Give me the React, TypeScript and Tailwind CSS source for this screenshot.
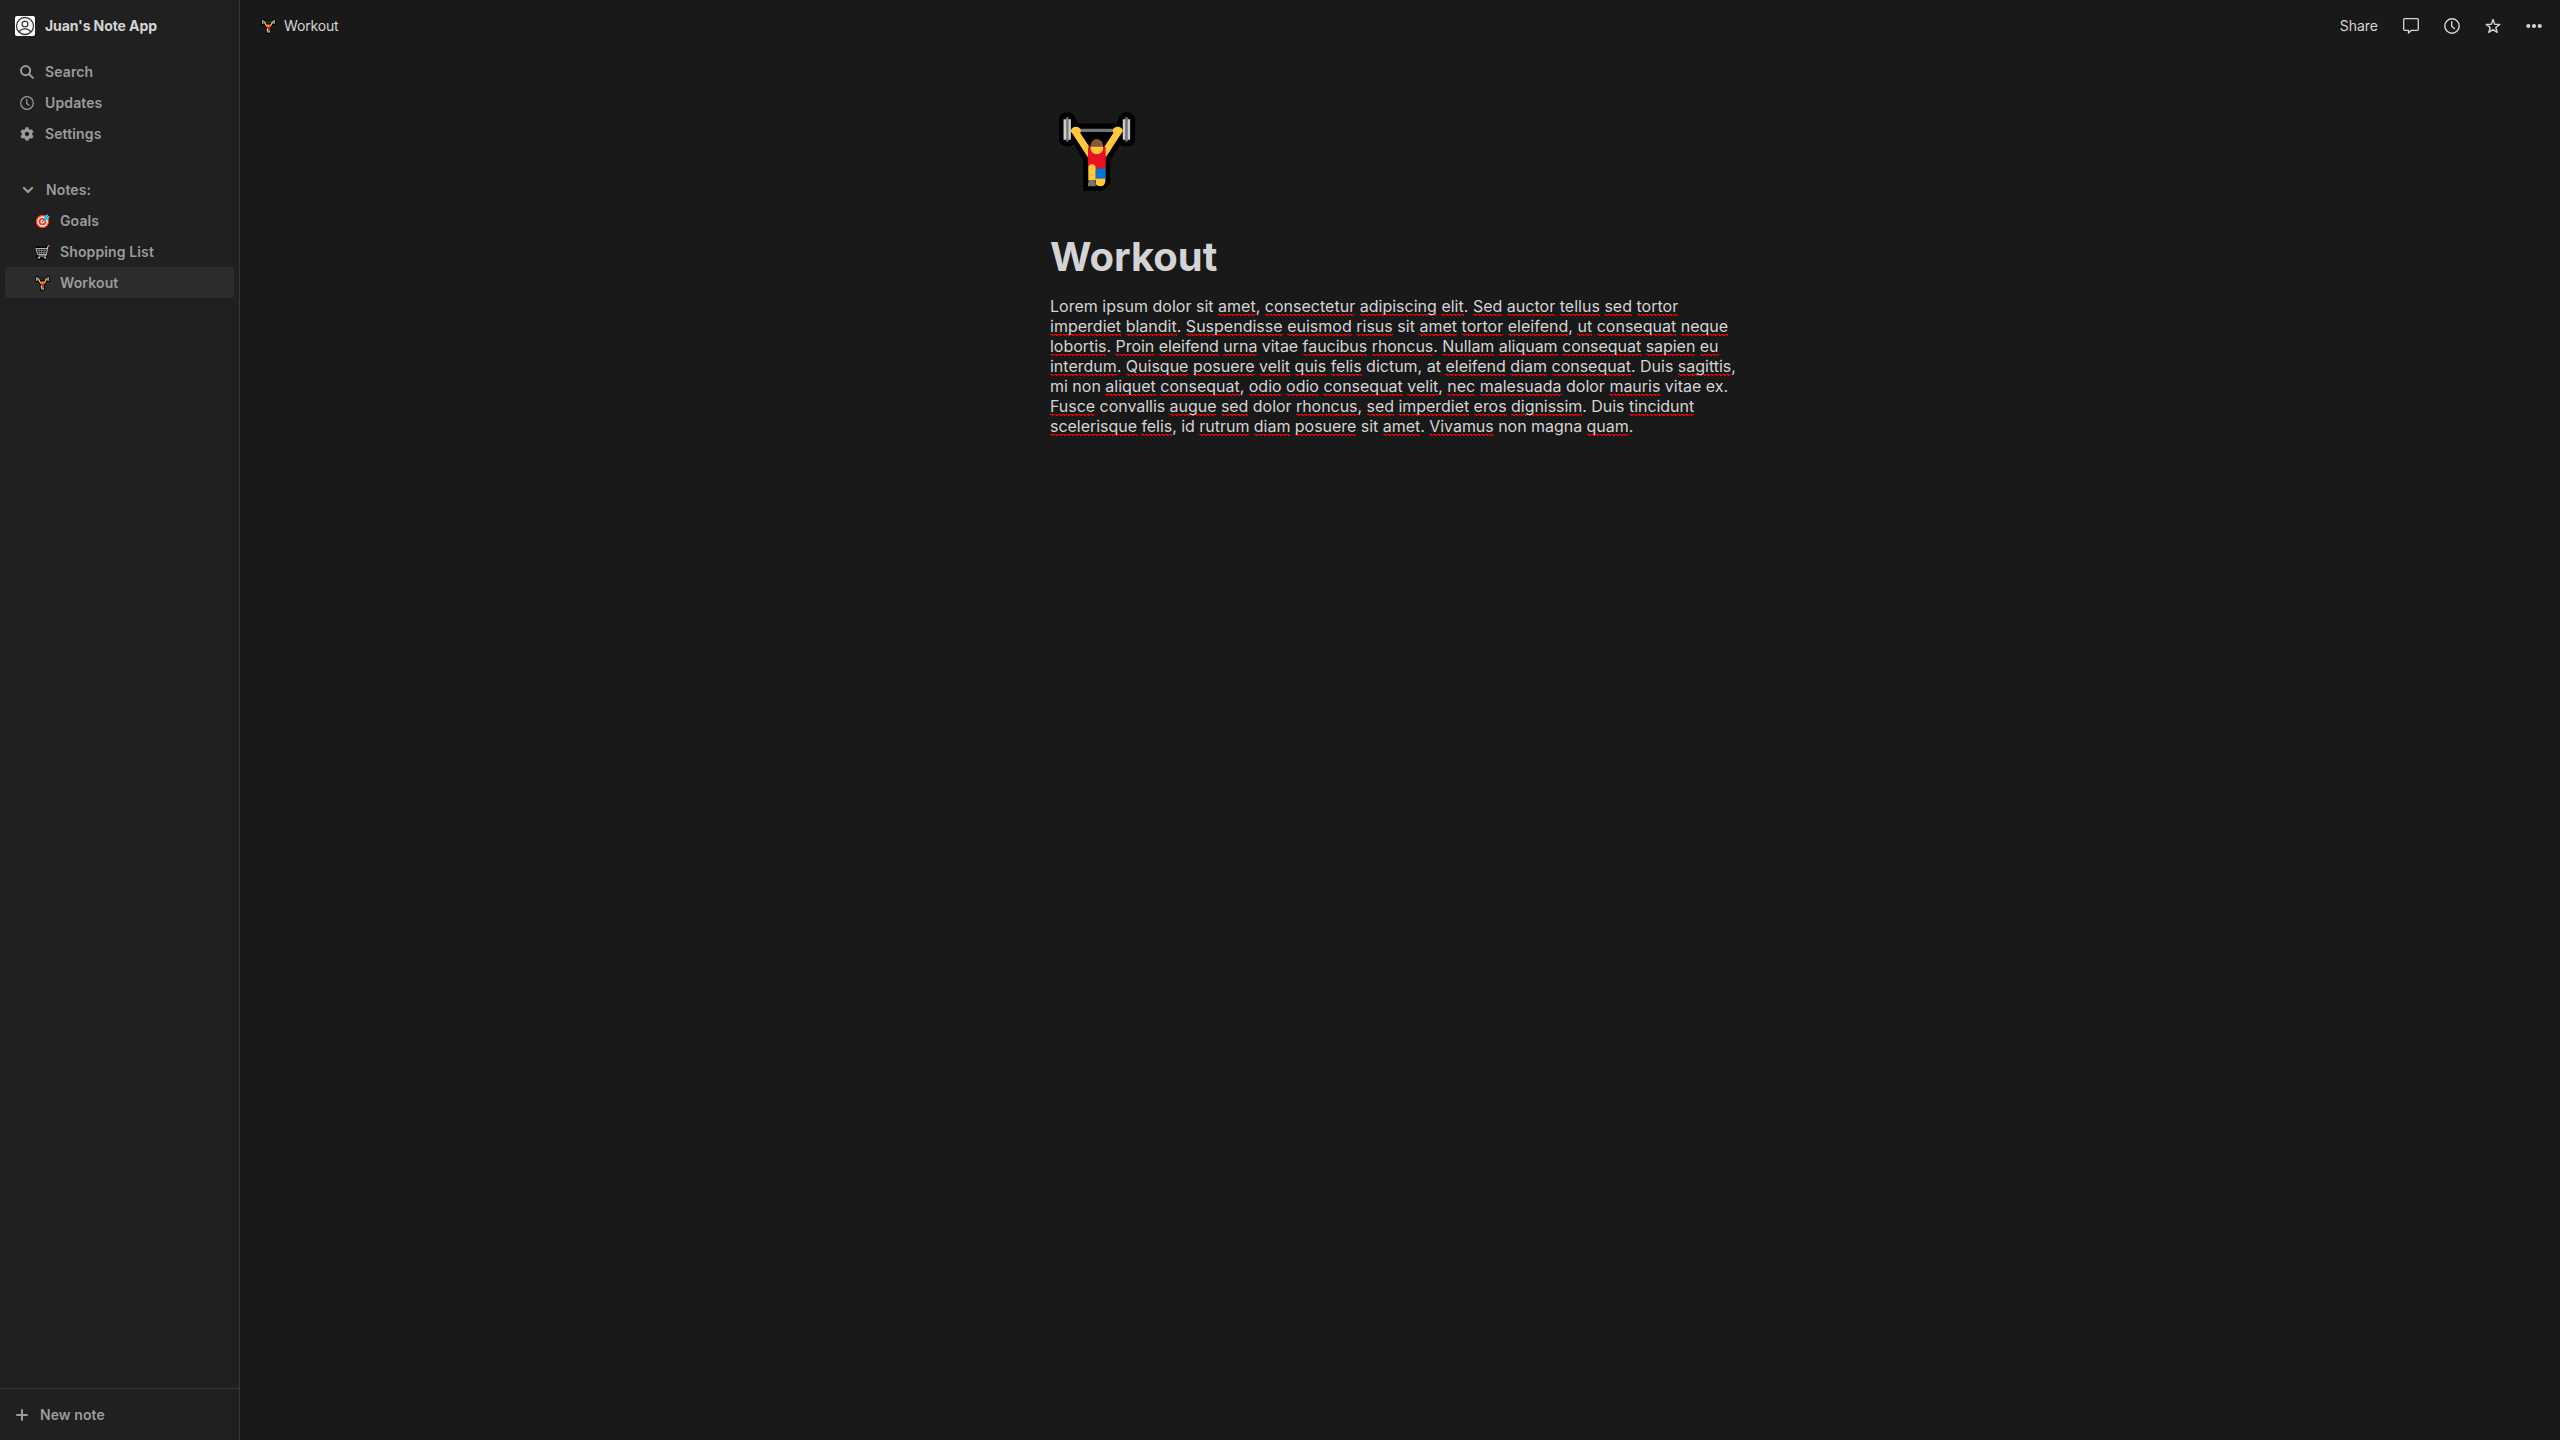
import { Fragment } from "react";
import type { ReactNode } from "react";
import { FaCog } from "react-icons/fa";

function WeightLifter({ className }: { className: string }) {
  return (
    <svg viewBox="55 30 232 245" className={className} aria-hidden="true">
      <path
        d="M57 56Q60 38 82 36Q104 38 108 56L112 70H230L235 56Q240 38 260 36Q283 40 285 56V122Q281 138 260 139Q246 137 240 132L211 180V250L190 270L186 272H130V182L103 132Q96 138 82 139Q61 137 57 122Z"
        fill="#000"
      />
      <path d="M71 58h22v61H71zM248 58h22v61h-22z" fill="#cccccc" />
      <path d="M79 52h7v72h-7zM255 52h8v72h-8z" fill="#767676" />
      <path d="M118 86h106v10H118z" fill="#767676" />
      <path d="M96 94L119 96L151 144L144 172L100 104zM245 94L222 96L190 144L197 172L241 104z" fill="#ffc83d" />
      <ellipse cx="108" cy="92" rx="15" ry="12" fill="#ffc83d" />
      <ellipse cx="233" cy="92" rx="15" ry="12" fill="#ffc83d" />
      <path d="M144 140h53v66h-53z" fill="#e81224" />
      <path d="M152 137h37v7a18.500 18.500 0 0 1-37 0z" fill="#ffc83d" />
      <path d="M152 140v-5a18.500 18 0 0 1 37 0v5z" fill="#8e562e" />
      <path d="M167 205h30v30h-30z" fill="#0078d7" />
      <path d="M167 235h29v8q-1 15-15 15q-9 0-14-6z" fill="#ffc83d" />
      <path d="M145 241v-38q1-11 11-11t11 11v38z" fill="#ffc83d" />
      <path d="M144 258v-8q1-10 11-10t12 10v8z" fill="#767676" />
    </svg>
  );
}

function Target() {
  return (
    <svg viewBox="0 0 16 16" className="size-4" aria-hidden="true">
      <circle cx="7.500" cy="8.500" r="7.500" fill="#000" />
      <circle cx="7.500" cy="8.500" r="6.900" fill="#f03a17" />
      <circle cx="7.500" cy="8.500" r="4.600" fill="none" stroke="#fff" strokeWidth="1.500" />
      <circle cx="7.500" cy="8.500" r="1.500" fill="none" stroke="#fff" strokeWidth="1.200" />
      <path d="M7.500 8.500L11 5" stroke="#106ebe" strokeWidth="1" />
      <path d="M9 7V4L12.200 1L13 3L15 3.800L12 7z" fill="#31d2f7" />
      <path d="M9.500 6.500L13 3" stroke="#0f8ad0" strokeWidth="0.800" />
    </svg>
  );
}

function Cart() {
  return (
    <svg viewBox="0 0 16 16" className="size-4" fill="none" aria-hidden="true">
      <path d="M1 4h11l2-3M2 8l1 4h9M3 14.500h8" stroke="#000" strokeWidth="3" />
      <path d="M1 4.500h11.500l-1.200 6H2.500z" fill="#222" stroke="#b5b5b5" strokeWidth="1" />
      <path d="M1.500 6.500h10.500M2 8.500h9.500M4 4.500l.6 6M6.500 4.500v6M9.200 4.500l-.4 6" stroke="#909090" strokeWidth="0.600" />
      <path d="M12 5l1.500-3.500M11.300 10.500l-1 1.500H3.500" stroke="#cccccc" strokeWidth="1.100" />
      <path d="M13 2.300l1.700-.9" stroke="#e8503a" strokeWidth="1.500" />
      <circle cx="4" cy="13.700" r="1" fill="#ccc" />
      <circle cx="10" cy="13.700" r="1" fill="#ccc" />
    </svg>
  );
}

function Clock({ className, width }: { className: string; width: number }) {
  return (
    <svg viewBox="0 0 16 16" className={className} fill="none" stroke="currentColor" strokeWidth={width} strokeLinecap="round" strokeLinejoin="round" aria-hidden="true">
      <circle cx="8" cy="8" r="7.200" />
      <path d="M7.700 3.800v4.700l2.700 2" />
    </svg>
  );
}

function Row({ icon, label, active = false, nested = false }: { icon: ReactNode; label: string; active?: boolean; nested?: boolean }) {
  return (
    <div
      className={`mx-[5px] flex h-[31px] items-center rounded-[3px] text-sm leading-5 font-semibold tracking-[0.12px] text-[#9b9b9b] ${
        active ? "bg-[#2c2c2c]" : ""
      } ${nested ? "pl-[30px]" : "pl-[15px]"}`}
    >
      <span className="flex min-w-[25px] shrink-0 items-center">{icon}</span>
      <span>{label}</span>
    </div>
  );
}

/* Words in [brackets] are flagged by the spell checker. */
const lines = [
  { tracking: "tracking-[0.012px]", text: "Lorem ipsum dolor sit [amet], [consectetur] [adipiscing] [elit]. [Sed] [auctor] [tellus] [sed] [tortor]" },
  { tracking: "tracking-[0.010px]", text: "[imperdiet] [blandit]. [Suspendisse] [euismod] [risus] sit [amet] [tortor] [eleifend], [ut] [consequat] [neque]" },
  { tracking: "tracking-[-0.035px]", text: "[lobortis]. [Proin] [eleifend] [urna] vitae [faucibus] [rhoncus]. [Nullam] [aliquam] [consequat] [sapien] [eu]" },
  { tracking: "tracking-[-0.004px]", text: "[interdum]. [Quisque] [posuere] [velit] [quis] [felis] dictum, at [eleifend] [diam] [consequat]. Duis [sagittis]," },
  { tracking: "tracking-[-0.010px]", text: "mi non [aliquet] [consequat], [odio] [odio] [consequat] [velit], [nec] [malesuada] dolor [mauris] vitae ex." },
  { tracking: "tracking-[-0.040px]", text: "[Fusce] convallis [augue] [sed] dolor [rhoncus], [sed] [imperdiet] [eros] [dignissim]. Duis [tincidunt]" },
  { tracking: "tracking-[-0.034px]", text: "[scelerisque] [felis], id [rutrum] [diam] [posuere] sit [amet]. [Vivamus] non magna [quam]." },
];

function Line({ text, tracking }: { text: string; tracking: string }) {
  return (
    <span className={`block whitespace-nowrap ${tracking}`}>
      {text.split(/(\[[^\]]+\])/).map((part, i) =>
        part.startsWith("[") ? (
          <span
            key={i}
            className="bg-[image:linear-gradient(90deg,#f00000_75%,transparent_75%),linear-gradient(90deg,transparent_50%,#f00000_50%)] bg-[length:4px_1px,4px_1px] bg-[position:0_calc(100%-1px),0_100%] bg-repeat-x"
          >
            {part.slice(1, -1)}
          </span>
        ) : (
          <Fragment key={i}>{part}</Fragment>
        ),
      )}
    </span>
  );
}

export default function App() {
  return (
    <div className="flex h-[1440px] w-[2560px] overflow-hidden bg-[#191919] font-['Inter',sans-serif] text-[#d4d4d4]">
      <aside className="flex w-60 shrink-0 flex-col border-r border-[#373737] bg-[#202020]">
        <div className="flex h-[52px] items-center gap-2.5 pl-[15px]">
          <svg viewBox="0 0 20 20" className="size-5" fill="none" stroke="#37373b" strokeWidth="1.300" aria-hidden="true">
            <rect width="20" height="20" rx="2" fill="#fff" stroke="none" />
            <circle cx="10" cy="10" r="8.500" />
            <circle cx="10" cy="8" r="2.900" />
            <path d="M4.200 16.200c1.200-2.600 3.200-3.400 5.800-3.400s4.600.8 5.800 3.400" />
          </svg>
          <span className="text-sm leading-5 font-bold tracking-[-0.09px]">Juan's Note App</span>
        </div>
        <nav className="mt-1 flex flex-col">
          <Row
            label="Search"
            icon={
              <svg viewBox="0 0 14 14" className="size-3.5" fill="none" stroke="currentColor" strokeWidth="2" strokeLinecap="round" aria-hidden="true">
                <circle cx="5.600" cy="5.600" r="4.600" />
                <path d="M9.200 9.200l3.700 3.700" />
              </svg>
            }
          />
          <Row label="Updates" icon={<Clock className="size-3.5" width={1.4} />} />
          <Row label="Settings" icon={<FaCog className="size-3.5" />} />
        </nav>
        <nav className="mt-[25px] flex flex-col">
          <Row
            label="Notes:"
            icon={
              <svg viewBox="0 0 10 6" className="mr-[13px] ml-[3px] h-1.5 w-2.5 shrink-0 overflow-visible" fill="none" stroke="currentColor" strokeWidth="2.200" strokeLinecap="round" strokeLinejoin="round" aria-hidden="true">
                <path d="M1 1l4 4 4-4" />
              </svg>
            }
          />
          <Row nested label="Goals" icon={<Target />} />
          <Row nested label="Shopping List" icon={<Cart />} />
          <Row nested active label="Workout" icon={<WeightLifter className="h-4 w-[15px]" />} />
        </nav>
        <div className="mt-auto flex h-[52px] items-center gap-3 border-t border-[#373737] pl-4 text-[#9b9b9b]">
          <svg viewBox="0 0 12 12" className="size-3" stroke="currentColor" strokeWidth="2" strokeLinecap="round" aria-hidden="true">
            <path d="M6 1v10M1 6h10" />
          </svg>
          <span className="text-sm leading-5 font-semibold tracking-[0.08px]">New note</span>
        </div>
      </aside>
      <div className="flex flex-1 flex-col">
        <header className="flex h-[52px] items-center justify-between pr-[18px] pl-[21px]">
          <div className="flex items-center gap-2">
            <WeightLifter className="h-4 w-[15px]" />
            <span className="text-sm leading-5 tracking-[-0.15px]">Workout</span>
          </div>
          <div className="flex items-center gap-[25px]">
            <span className="text-sm leading-5">Share</span>
            <svg viewBox="0 0 16 16" className="size-4" fill="none" stroke="currentColor" strokeWidth="1.300" strokeLinejoin="round" aria-hidden="true">
              <path d="M1.700 0.700h12.600q1 0 1 1v9.600q0 1-1 1H8.500L5.500 15v-2.700H1.700q-1 0-1-1V1.700q0-1 1-1z" />
            </svg>
            <Clock className="size-4" width={1.4} />
            <svg viewBox="0 0 16 16" className="size-4" fill="none" stroke="currentColor" strokeWidth="1.400" strokeLinejoin="round" aria-hidden="true">
              <path d="M8 1.500l1.700 4.700 5.100.2-4 3.100 1.400 4.900L8 11.600l-4.200 2.800 1.400-4.900-4-3.100 5.100-.2z" />
            </svg>
            <svg viewBox="0 0 16 16" className="size-4" fill="currentColor" aria-hidden="true">
              <circle cx="2.300" cy="8" r="2.100" />
              <circle cx="8" cy="8" r="2.100" />
              <circle cx="13.700" cy="8" r="2.100" />
            </svg>
          </div>
        </header>
        <main className="ml-[810px] flex w-[700px] flex-col pt-[58px]">
          <WeightLifter className="ml-2 h-[82px] w-[78px]" />
          <h1 className="mt-[41px] text-[40px] leading-[48px] font-bold">Workout</h1>
          <p className="mt-[15px] text-base leading-5">
            {lines.map((line) => (
              <Line key={line.text} text={line.text} tracking={line.tracking} />
            ))}
          </p>
        </main>
      </div>
    </div>
  );
}
